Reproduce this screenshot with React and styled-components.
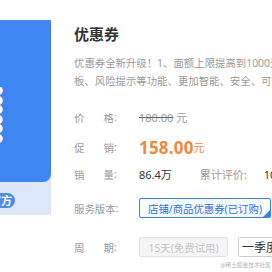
import React from "react";
import styled, {createGlobalStyle} from "styled-components";

const GlobalStyle = createGlobalStyle`
	body {
		margin: 0;
		background: #fff;
		font-family: "Noto Sans", "Noto Sans CJK SC", sans-serif;
	}
`;

const Page = styled.div`
	position: relative;
	display: flex;
	width: 272px;
	height: 272px;
	overflow: hidden;
	background: #fff;
`;

const Cover = styled.div`
	flex: 0 0 51px;
	width: 51px;
	height: 195px;
	margin-top: 20px;
	display: flex;
	flex-direction: column;
	background: #dce7fb;
	overflow: hidden;
`;

const CoverTop = styled.div`
	height: 162px;
	box-sizing: border-box;
	padding-top: 67px;
	background: #3e86f2;
	border-bottom-right-radius: 8px;
	overflow: hidden;
`;

/* the cover image is cropped by the page edge: only the tip of its text shows */
const CoverDots = styled.div`
	width: 3px;
	overflow: hidden;
	direction: rtl;
	color: #fff;
	font-size: 10px;
	font-weight: 700;
	line-height: 9.6px;
	white-space: nowrap;
`;

const CoverFoot = styled.div`
	flex: 1;
	display: flex;
	align-items: center;
`;

const PillWrap = styled.div`
	width: 15px;
	overflow: hidden;
	direction: rtl;
`;

const Pill = styled.span`
	display: inline-block;
	height: 15px;
	padding: 0 3px 0 6px;
	border-radius: 8px;
	background: #4a8cf0;
	color: #fff;
	font-size: 11px;
	font-weight: 700;
	line-height: 15px;
	white-space: nowrap;
`;

const Content = styled.div`
	flex: 0 0 400px;
	margin-left: 23px;
	padding-top: 24px;
`;

const Title = styled.h1`
	margin: 0;
	font-size: 15px;
	font-weight: 700;
	line-height: 20px;
	color: #333;
`;

const Desc = styled.div`
	margin-top: 10px;
	font-size: 10.4px;
	line-height: 18px;
	color: #999;
	white-space: nowrap;
`;

const Row = styled.div`
	display: flex;
	align-items: center;
	height: ${p => p.$h || 20}px;
	margin-top: ${p => p.$mt || 0}px;
	font-size: 10.4px;
	color: #333;
	white-space: nowrap;
`;

const Label = styled.div`
	flex: 0 0 65px;
	display: flex;
	color: #999;
`;

const LabelText = styled.span`
	display: flex;
	justify-content: space-between;
	min-width: 40px;
`;

const OldPrice = styled.span`
	color: #999;
	font-size: 11px;

	s {
		text-decoration-color: #666;
	}
`;

const Promo = styled.span`
	color: #f08a38;
	font-size: 17px;
	font-weight: 700;
	letter-spacing: 0.2px;
`;

const Unit = styled.span`
	color: #f08a38;
	font-size: 11px;
`;

const Muted = styled.span`
	margin-left: ${p => p.$ml || 0}px;
	color: ${p => (p.$dark ? "#333" : "#999")};
	font-size: 11px;
`;

const ServiceOption = styled.div`
	position: relative;
	box-sizing: border-box;
	height: 20px;
	padding: 0 8px;
	display: flex;
	align-items: center;
	border: 1px solid #3b7ff0;
	border-radius: 2px;
	background: #f7faff;
	color: #2f6fe0;

	&::after {
		content: "";
		position: absolute;
		right: 0;
		bottom: 0;
		border-left: 7px solid transparent;
		border-bottom: 7px solid #3b7ff0;
	}
`;

const PeriodOption = styled.div`
	box-sizing: border-box;
	height: 20px;
	margin-right: 10px;
	padding: ${p => (p.$disabled ? "0" : "0 3px")};
	width: ${p => (p.$disabled ? "89px" : "auto")};
	display: flex;
	align-items: center;
	justify-content: ${p => (p.$disabled ? "center" : "flex-start")};
	border: 1px solid ${p => (p.$disabled ? "#e2e2e2" : "#cfcfcf")};
	border-radius: 2px;
	background: ${p => (p.$disabled ? "#f5f5f5" : "#fff")};
	color: ${p => (p.$disabled ? "#c6c6c6" : "#333")};
	font-size: ${p => (p.$disabled ? "10.4px" : "12px")};
`;

const Watermark = styled.span`
	position: absolute;
	right: 1px;
	bottom: 3px;
	font-size: 5.7px;
	color: #b5b5b5;
	white-space: nowrap;
`;

const Field = ({children, wide}) => (
	<Label>
		{wide ? children : (
			<LabelText>
				<span>{children[0]}</span>
				<span>{children[1]}</span>
			</LabelText>
		)}
		<span>:</span>
	</Label>
);

const App = () => (
	<Page>
		<GlobalStyle/>
		<Cover>
			<CoverTop>
				<CoverDots>
					<div>●</div>
					<div>●</div>
					<div>●</div>
					<div>●</div>
					<div>●</div>
					<div>●</div>
				</CoverDots>
			</CoverTop>
			<CoverFoot>
				<PillWrap>
					<Pill>官方</Pill>
				</PillWrap>
			</CoverFoot>
		</Cover>
		<Content>
			<Title>优惠券</Title>
			<Desc>
				<div>优惠券全新升级！1、面额上限提高到1000元，2、新增优惠券模</div>
				<div>板、风险提示等功能、更加智能、安全、可靠，3、支持多种</div>
			</Desc>
			<Row $h={26} $mt={14}>
				<Field>价格</Field>
				<OldPrice><s>180.00</s> 元</OldPrice>
			</Row>
			<Row $h={34}>
				<Field>促销</Field>
				<Promo>158.00</Promo>
				<Unit>元</Unit>
			</Row>
			<Row $h={20}>
				<Field>销量</Field>
				<Muted $dark>86.4万</Muted>
				<Muted $ml={28}>累计评价:</Muted>
				<Muted $ml={17} $dark>100万+</Muted>
			</Row>
			<Row $h={20} $mt={14}>
				<Field wide>服务版本</Field>
				<ServiceOption>店铺/商品优惠券(已订购)</ServiceOption>
			</Row>
			<Row $h={20} $mt={19}>
				<Field>周期</Field>
				<PeriodOption $disabled>15天(免费试用)</PeriodOption>
				<PeriodOption>一季度(¥158)</PeriodOption>
			</Row>
		</Content>
		<Watermark>@稀土掘金技术社区</Watermark>
	</Page>
);

export default App;
